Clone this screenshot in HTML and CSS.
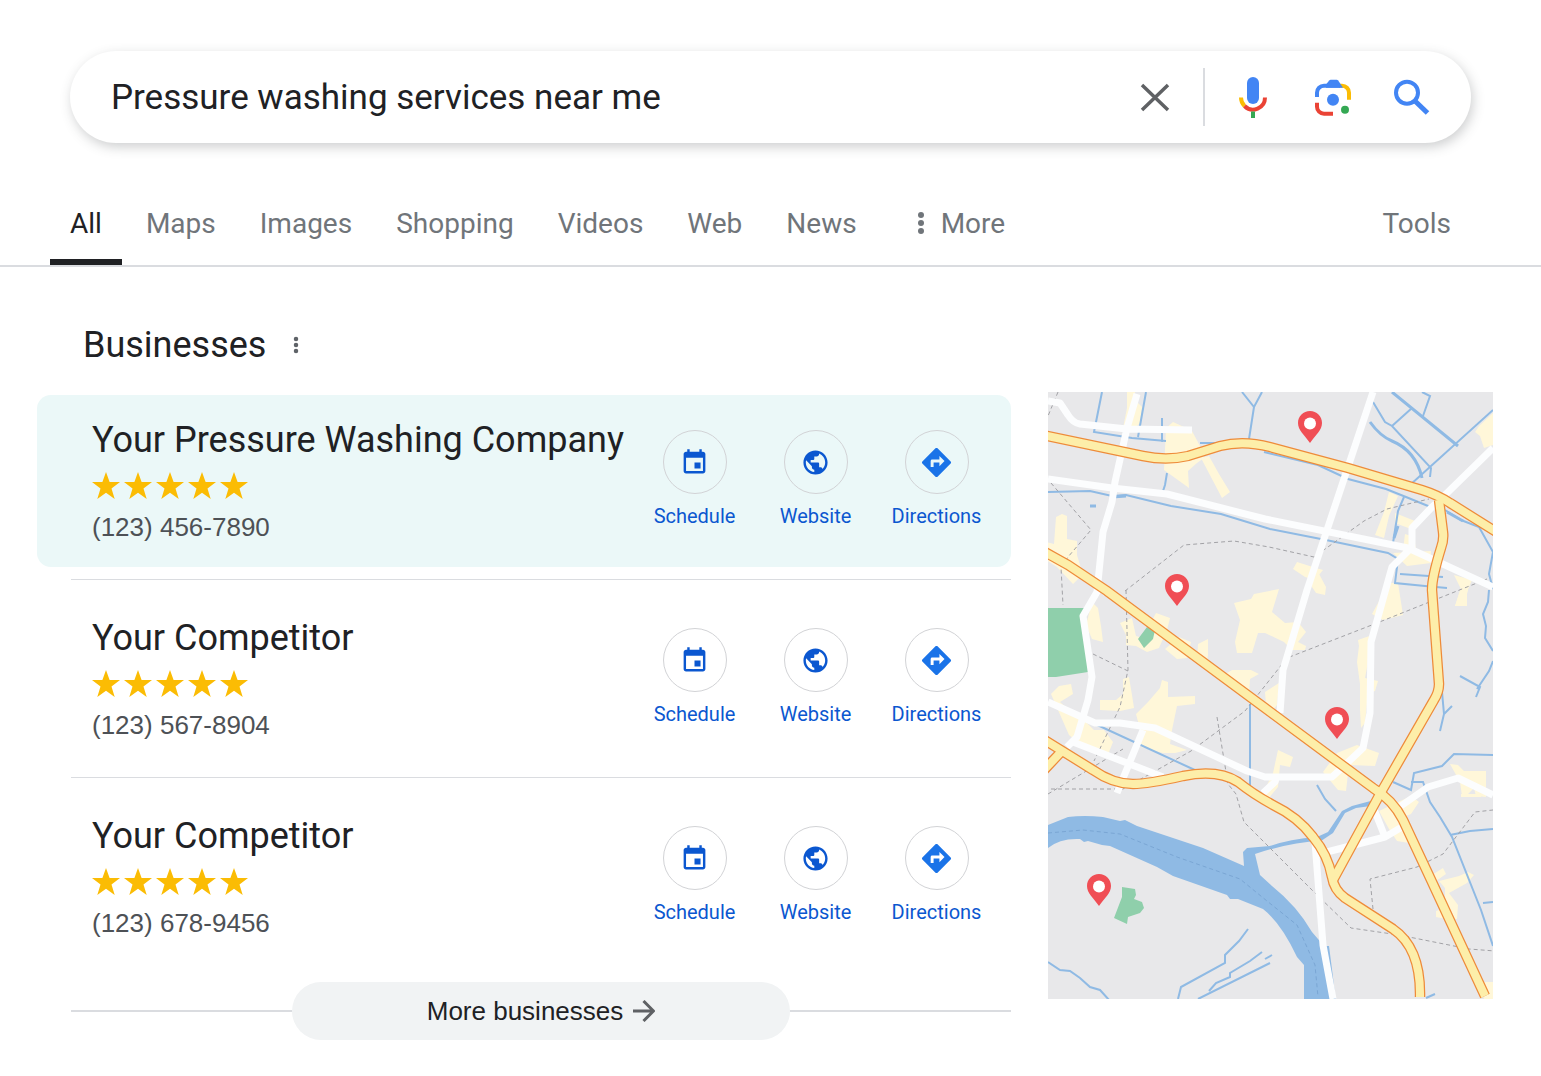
FILE: index.html
```html
<!DOCTYPE html>
<html lang="en">
<head>
    <meta charset="UTF-8">
    <meta name="viewport" content="width=device-width, initial-scale=1">
    <title>Pressure washing services near me</title>
    <link rel="stylesheet" href="styles.css">
</head>
<body>
    <!-- Shared icons -->
    <svg class="sprite" aria-hidden="true">
        <symbol id="star" viewBox="0 0 28 27">
            <path d="M14 0l3.600 10H28l-8.500 6.400L22.700 27 14 20.700 5.300 27l3.200-10.600L0 10h10.400z"/>
        </symbol>
        <symbol id="calendar" viewBox="0 0 24 24">
            <path d="M17 12h-5v5h5v-5zM16 1v2H8V1H6v2H5c-1.110 0-1.990.9-1.990 2L3 19c0 1.100.890 2 2 2h14c1.100 0 2-.9 2-2V5c0-1.100-.9-2-2-2h-1V1h-2zm3 18H5V8h14v11z"/>
        </symbol>
        <symbol id="globe" viewBox="0 0 24 24">
            <path d="M12 2C6.480 2 2 6.480 2 12s4.480 10 10 10 10-4.480 10-10S17.520 2 12 2zm-1 17.930c-3.950-.49-7-3.850-7-7.930 0-.62.080-1.210.210-1.790L9 15v1c0 1.100.9 2 2 2v1.930zm6.900-2.540c-.26-.81-1-1.390-1.900-1.390h-1v-3c0-.55-.45-1-1-1H8v-2h2c.55 0 1-.45 1-1V7h2c1.100 0 2-.9 2-2v-.41c2.930 1.190 5 4.060 5 7.410 0 2.080-.8 3.970-2.100 5.390z"/>
        </symbol>
        <symbol id="directions" viewBox="0 0 24 24">
            <path d="M21.710 11.290l-9-9c-.39-.39-1.020-.39-1.410 0l-9 9c-.39.390-.39 1.020 0 1.410l9 9c.390.390 1.020.390 1.410 0l9-9c.390-.38.390-1.010 0-1.410zM14 14.500V12h-4v3H8v-4c0-.55.450-1 1-1h5V7.500l3.500 3.500-3.500 3.500z"/>
        </symbol>
        <symbol id="dots" viewBox="0 0 8 24">
            <circle cx="4" cy="4" r="3"/>
            <circle cx="4" cy="12" r="3"/>
            <circle cx="4" cy="20" r="3"/>
        </symbol>
        <symbol id="pin" viewBox="0 0 24 32">
            <path fill="#f04e55" d="M12 0C5.300 0 0 5.300 0 12c0 7 6 11.500 12 20 6-8.500 12-13 12-20 0-6.700-5.300-12-12-12z"/>
            <circle cx="12" cy="12.500" r="6" fill="#fff"/>
        </symbol>
    </svg>

    <form class="search" role="search">
        <input class="search-input" type="text" aria-label="Search" value="Pressure washing services near me">
        <button class="icon-button" type="reset" aria-label="Clear">
            <svg viewBox="0 0 40 40" fill="none" stroke="#5f6164" stroke-width="3.500">
                <path d="M7 8l26 25M33 8L7 33"/>
            </svg>
        </button>
        <span class="search-divider"></span>
        <button class="icon-button" type="button" aria-label="Search by voice">
            <svg viewBox="0 0 40 40" fill="none" stroke-width="4">
                <rect x="14" y="0" width="12" height="27" rx="6" fill="#4285f4"/>
                <path stroke="#fbbc04" d="M8 20.500a12 12 0 0 0 3.500 8.500"/>
                <path stroke="#ea4335" d="M11.500 29A12 12 0 0 0 32 20.500"/>
                <path stroke="#34a853" d="M20 34.500V41"/>
            </svg>
        </button>
        <button class="icon-button wide" type="button" aria-label="Search by image">
            <svg viewBox="0 0 40 40" fill="none" stroke-width="4">
                <path stroke="#fbbc04" d="M26 8.700h3a7 7 0 0 1 7 7v7"/>
                <path stroke="#4285f4" d="M4 20v-4.300a7 7 0 0 1 7-7h16"/>
                <path fill="#4285f4" d="M13 7.500l3.200-4.100q.6-.7 1.500-.7h6q.9 0 1.500.7l4.800 7.300H13z"/>
                <path stroke="#ea4335" d="M4 25.700v4a7 7 0 0 0 7 7h9"/>
                <circle cx="20" cy="22.700" r="6" fill="#4285f4"/>
                <circle cx="32" cy="32.700" r="4" fill="#34a853"/>
            </svg>
        </button>
        <button class="icon-button wide" type="submit" aria-label="Search">
            <svg viewBox="0 0 40 40" fill="none" stroke="#4285f4">
                <circle cx="14" cy="15.700" r="11" stroke-width="4"/>
                <path stroke-width="5" d="M22 24l12.500 12"/>
            </svg>
        </button>
    </form>

    <nav class="tabs">
        <a class="tab active" href="#">All</a>
        <a class="tab" href="#">Maps</a>
        <a class="tab" href="#">Images</a>
        <a class="tab" href="#">Shopping</a>
        <a class="tab" href="#">Videos</a>
        <a class="tab" href="#">Web</a>
        <a class="tab" href="#">News</a>
        <a class="tab more" href="#"><svg class="more-dots"><use href="#dots"/></svg>More</a>
        <a class="tab tools" href="#">Tools</a>
    </nav>

    <main class="results">
        <section class="businesses">
            <div class="heading">
                <h1>Businesses</h1>
                <button class="menu-button" type="button" aria-label="About these results"><svg><use href="#dots"/></svg></button>
            </div>

            <ul class="list">
                <li class="item">
                    <article class="business highlighted">
                        <div class="info">
                            <h2>Your Pressure Washing Company</h2>
                            <div class="stars" role="img" aria-label="5 stars">
                                <svg><use href="#star"/></svg><svg><use href="#star"/></svg><svg><use href="#star"/></svg><svg><use href="#star"/></svg><svg><use href="#star"/></svg>
                            </div>
                            <p class="phone">(123) 456-7890</p>
                        </div>
                        <div class="actions">
                            <a class="action" href="#"><span class="circle"><svg><use href="#calendar"/></svg></span>Schedule</a>
                            <a class="action" href="#"><span class="circle"><svg><use href="#globe"/></svg></span>Website</a>
                            <a class="action" href="#"><span class="circle"><svg class="route"><use href="#directions"/></svg></span>Directions</a>
                        </div>
                    </article>
                </li>
                <li class="item">
                    <article class="business">
                        <div class="info">
                            <h2>Your Competitor</h2>
                            <div class="stars" role="img" aria-label="5 stars">
                                <svg><use href="#star"/></svg><svg><use href="#star"/></svg><svg><use href="#star"/></svg><svg><use href="#star"/></svg><svg><use href="#star"/></svg>
                            </div>
                            <p class="phone">(123) 567-8904</p>
                        </div>
                        <div class="actions">
                            <a class="action" href="#"><span class="circle"><svg><use href="#calendar"/></svg></span>Schedule</a>
                            <a class="action" href="#"><span class="circle"><svg><use href="#globe"/></svg></span>Website</a>
                            <a class="action" href="#"><span class="circle"><svg class="route"><use href="#directions"/></svg></span>Directions</a>
                        </div>
                    </article>
                </li>
                <li class="item">
                    <article class="business">
                        <div class="info">
                            <h2>Your Competitor</h2>
                            <div class="stars" role="img" aria-label="5 stars">
                                <svg><use href="#star"/></svg><svg><use href="#star"/></svg><svg><use href="#star"/></svg><svg><use href="#star"/></svg><svg><use href="#star"/></svg>
                            </div>
                            <p class="phone">(123) 678-9456</p>
                        </div>
                        <div class="actions">
                            <a class="action" href="#"><span class="circle"><svg><use href="#calendar"/></svg></span>Schedule</a>
                            <a class="action" href="#"><span class="circle"><svg><use href="#globe"/></svg></span>Website</a>
                            <a class="action" href="#"><span class="circle"><svg class="route"><use href="#directions"/></svg></span>Directions</a>
                        </div>
                    </article>
                </li>
            </ul>

            <div class="more-row">
                <button class="more-button" type="button">
                    More businesses
                    <svg viewBox="0 0 22 22" fill="none" stroke="#5f6164" stroke-width="3"><path d="M0 11h20M10.500 1l10 10-10 10"/></svg>
                </button>
            </div>
        </section>

        <svg class="map" viewBox="0 0 445 607" role="img" aria-label="Map of businesses">
            <rect width="445" height="607" fill="#e8e8ea"/>

            <!-- built-up areas -->
            <g fill="#fff7d9">
                <path d="M79 0h8l-1 7 8 8-2 16-7 7-10-2 4-20zM118 36l7-6 11 5 8 4 8 15 4 12-7 5-9 8 1 17-25-18z"/>
                <path d="M153 66l8-2 10 18 11 18-8 6zM8 125l6-3 5 2 0 23 10 2 0 14 3 10 3 9-10 10-16-17-11-7v-18l8 2z"/>
                <path d="M341 100l9 4-9 20-5 22-9-3 9-23zM347 121l20 8-4 8-16-6zM249 170l19 6 7 2-8 10-10-3-12-8zM270 180l8 15-1 8-9-2-8-12zM357 142l9 3 4 25-16-4zM345 161l38-2v12l-24 3zM406 183l18 5-5 12 0 14-12 0 6-17zM431 34l14-13v32l-9 3-4-12-5-4z"/>
                <path d="M186 211l17-4 3-5 25-5-7 23 13 11 13-1 8 10-8 10 8 4-1 4h-13l-8-8-19-9h-7l-6 20-15 0-2-11 5-22z"/>
                <path d="M341 191l9 0 5 32-20 5-11-6zM310 248l17-6-5 18-5 26 13 3-3 10-7 2-3 30-4 5-1-18 0-26-3-22 2-16zM412 198h8l-4 16-9 0z"/>
                <path d="M72 231l12-5 4 18 10 3 4-15 6-11 14 5-3 12-8 18-12 4-11-6-10-1v-10zM44 210l6 6 3 18 2 16-11-3-6-14zM117 257l14-12 12 5-4 16-10 1zM150 252l10-5 0 16-2 14-9-8zM174 284l10-6 19 0 8 4-9 5-1 18-10-5z"/>
                <path d="M3 302l8-8 12-2 2 10-13 8 8 7 14 9 12 12 10 0 9 12-6 15-26-12-12-10zM52 308h16l7-6v-15l6-2 3 18 2 13-14 3-20-1z"/>
                <path d="M88 322l12-12 12-14 2-8 6 2 0 15 27-1v8l-18 2-5 24-2 14 17 6-12 3-12 0-22-6 0-14z"/>
                <path d="M217 300l14-9-2 22-10 12zM230 358l15 7-3 10-10-2-2 22-10 12-5-6 10-20zM289 361l20-8 22 8-4 13-26-1-3 26-8-1-15-18zM402 372l8 1 6 6 22 0 0 26-10-1-2-8-8 8h-4l-2-14zM333 418l30-14 8 6-8 12-10 4 8 25-12-2-8-12-10-18zM384 483l11-7 3 6-10 7zM391 489l20-5 9-4 6 3-7 8-18 10 9 12-1 14-16-1-5-1 0-6 9-3 0-20z"/>
                <path d="M434 590h11v17h-9zM413 402h20v3h-20z"/>
            </g>

            <!-- parks -->
            <g fill="#8fcfab">
                <path d="M0 216h36l4 64-32 5H0z"/>
                <path d="M90 247l9-12 8 3-2 9-9 9zM74 495l13 2 1 6-2 4 8 3 2 6-4 5-12 4-1 7-13-6 8-21z"/>
            </g>

            <!-- water -->
            <path fill="#8fbae4" d="M0 433l20-8q16-2 35 0l17 4 5-1 12 6 66 22 41 18-1-14 4-4 23-2q20-7 47-9l11-5 14-21 10-5 26-7v6l-22 3-11 5-12 20-12 8q-30 1-66 13l5 21 12 11q25 20 40 46l12 14h5q4 30 7 57H256V573l-7-8q-16-34-34-48l-25-10h-8l-3-4-54-19-16-9-47-21-8-1-14-4-4 1-4-3q-20-1-32 9z"/>
            <g fill="none" stroke="#8fbae4" stroke-width="2">
                <path d="M54 0l-8 40 38 6 34 3M98 0l-8 45M114 26v24M119 81l-2 12-2 6M194 0l12 15 8-15M206 15l-5 32M152 51h18M0 100l42-1 22 5 14-1 45 11 50 8 49 15 56 11 62 13 10 6-3 24 30 3 22 2M216 60l54 13 30 14 38 10 20 8 27 11"/>
                <path d="M325 10l12 20 7 4 39 42-1 9M362 93l83-75M344 34l20-18M374 0l8 4-7 20M356 105l-6 14-5 32M397 118l16 10 18 7 14 25-4 22 4 15M352 182l43 3"/>
                <path d="M202 312v88M45 331l104 48M441 198l-1 12-5 12 3 12-1 12 8 13M412 284l20 11-4 10M429 297l12-18 4-10M394 300l2 22-4 17M396 322l8-8"/>
                <path d="M345 390l18 8 3-17 28-7 12-12 39 1M363 390h12l7 20 10 15 12 20 29 73 12 36M402 443l20-4 23-2M435 511l10-1M269 393l8 14 11 12"/>
                <path d="M0 570l12 8 10 1 10 7 10 9 10 3 10 11M130 607l3-12 44-24v-8l14-14 9-12M150 607l72-36M161 599l7-8 14-6v-4l20-12 12-9M217 567l7-4M378 606l9-4"/>
            </g>
            <g fill="none" stroke="#8fbae4" stroke-width="3">
                <path d="M344 0l66 54M322 30q10 14 22 19 24 10 30 37M64 105l14-1M42 114h6M399 120l16 9M346 146l4-12"/>
            </g>

            <!-- district borders -->
            <g fill="none" stroke="#a2a2a6" stroke-dasharray="4 3">
                <path d="M10 0L0 24M3 91l40 47-23 27-7 10 2 38M77 199l59-46 50-4 35 6 45 10 50-36 23-12 42-10M78 198l2 80-8 37-26 54M45 262l35 17M0 402l75-45M3 397h72l68-38 54-40 42-53 90-35 60-24 50-20M169 325l11 67 8 10 8 28 30 30 40 40 37 36 48 7 70 14 26 2M325 517l-3-30 47-12 26-13 32-42 18-2"/>
                <path stroke="#7aa6d4" d="M0 441l35-3 37 4 57 23 63 22 27 22 30 24 18 40 3 32"/>
            </g>

            <!-- streets -->
            <g fill="none" stroke="#fcfdfe" stroke-width="7" stroke-linejoin="round">
                <path d="M0 9l12 2 8 12q5 8 12 9l47 5 65 1M89 2L79 36 67 90l-3 20-9 30-6 60-14 24 9 61-4 23-11 37-10 10"/>
                <path d="M0 87l64 9 55 6 98 25 143 29 85 39M325 0l-66 198-20 67-4 13-3 43"/>
                <path d="M445 56l-48 47-13 12-20 21v19l-20 20-7 25-14 50-1 71-7 35-18 17-13 12h-67l-18-6-92-43-35-5H47L0 310"/>
                <path d="M25 350l90 35M95 338l-26 63M229 384l-2 6-12 11M350 416l30-21 30-9 35 17M324 412l13 33 17-10M275 461l62-16M267 450l8 103 10 54"/>
            </g>

            <!-- main roads, casing first -->
            <g fill="none" stroke="#ee8b3a" stroke-width="10.500">
                <path d="M-5 43l100 21q23 5 45 0l32-10q23-6 50 1l78 21 74 22q16 5 28 13l48 30"/>
                <path d="M-4 378l17-18M391 108l4 32q1 8-2 16-9 29-9 42l7 94q0 8-5 16l-54 94-47 86"/>
                <path d="M-5 347l50 31q20 14 40 14 15 0 50-8 35-7 55 6 15 12 35 23 25 12 40 32 15 18 19 40 2 13 13 21l48 31q28 19 27 68"/>
                <path d="M-5 159l25 14 39 26 158 117 108 80q20 12 30 32l29 62 53 114"/>
            </g>
            <g fill="none" stroke="#fdeea9" stroke-width="8">
                <path d="M-5 43l100 21q23 5 45 0l32-10q23-6 50 1l78 21 74 22q16 5 28 13l48 30"/>
                <path d="M-4 378l17-18M391 108l4 32q1 8-2 16-9 29-9 42l7 94q0 8-5 16l-54 94-47 86"/>
                <path d="M-5 347l50 31q20 14 40 14 15 0 50-8 35-7 55 6 15 12 35 23 25 12 40 32 15 18 19 40 2 13 13 21l48 31q28 19 27 68"/>
                <path d="M-5 159l25 14 39 26 158 117 108 80q20 12 30 32l29 62 53 114"/>
            </g>

            <!-- pins -->
            <use href="#pin" x="250" y="19" width="24" height="32"/>
            <use href="#pin" x="117" y="182" width="24" height="32"/>
            <use href="#pin" x="277" y="315" width="24" height="32"/>
            <use href="#pin" x="39" y="482" width="24" height="32"/>
        </svg>
    </main>
</body>
</html>
```
FILE: styles.css
```css
* {
    box-sizing: border-box;
}
body {
    margin: 0;
    background-color: #fff;
    color: #202124;
    font-family: Roboto, "Liberation Sans", sans-serif;
}
a {
    color: inherit;
    text-decoration: none;
}
button {
    padding: 0;
    border: none;
    background: none;
    font: inherit;
    color: inherit;
    cursor: pointer;
}
svg {
    display: block;
    flex: none;
}
.sprite {
    position: absolute;
    width: 0;
    height: 0;
}

/* Search bar */
.search {
    display: flex;
    align-items: center;
    height: 92px;
    margin: 51px 70px 0;
    padding: 0 38px 0 41px;
    border-radius: 46px;
    box-shadow: 2px 4px 12px rgba(60, 64, 67, 0.25);
}
.search-input {
    flex: 1;
    min-width: 0;
    padding: 0;
    border: none;
    outline: none;
    background: none;
    color: #202124;
    font-family: inherit;
    font-size: 35px;
}
.icon-button svg {
    width: 40px;
    height: 40px;
    overflow: visible;
}
.icon-button.wide {
    margin-left: 40px;
}
.search-divider {
    width: 2px;
    height: 58px;
    margin: 0 28px;
    background-color: #dadce0;
}

/* Tabs */
.tabs {
    display: flex;
    gap: 4px;
    margin-top: 36px;
    padding: 0 70px 0 50px;
    border-bottom: 2px solid #dadce0;
}
.tab {
    display: flex;
    align-items: center;
    height: 86px;
    padding: 8px 20px 0;
    border-bottom: 6px solid transparent;
    color: #70757a;
    font-size: 28px;
}
.tab.active {
    border-color: #202124;
    color: #202124;
}
.tab.more {
    margin-left: 16px;
}
.more-dots {
    width: 8px;
    height: 24px;
    margin-right: 16px;
    fill: #70757a;
}
.tab.tools {
    margin-left: auto;
}

/* Results */
.results {
    display: grid;
    grid-template-columns: 974fr 445fr;
    gap: 37px;
    align-items: start;
    padding: 56px 48px 36px 37px;
}
.heading {
    display: flex;
    align-items: center;
    gap: 26px;
    padding-left: 46px;
}
h1, h2 {
    margin: 0;
    font-size: 36px;
    line-height: 44px;
    font-weight: 400;
}
.menu-button svg {
    width: 8px;
    height: 18px;
    fill: #5f6368;
}
.list {
    margin: 15px 0 0 34px;
    padding: 0;
    list-style: none;
}
.item {
    padding: 13px 0 12px;
    border-bottom: 1px solid #dadce0;
}
.item:last-child {
    border-bottom: none;
}
.business {
    display: flex;
    justify-content: space-between;
    padding: 23px 14px 25px 21px;
}
.business.highlighted {
    margin-left: -34px;
    padding-left: 55px;
    border-radius: 14px;
    background-color: #ebf8f8;
}
.info h2 {
    white-space: nowrap;
}
.stars {
    display: flex;
    gap: 4px;
    margin-top: 10px;
}
.stars svg {
    width: 28px;
    height: 27px;
    fill: #fbbc04;
}
.phone {
    margin: 13px 0 0;
    color: #4d5156;
    font-family: "Liberation Sans", Arial, sans-serif;
    font-size: 26px;
    line-height: 30px;
}
.actions {
    display: grid;
    grid-template-columns: repeat(3, 121px);
    padding-top: 12px;
}
.action {
    display: flex;
    flex-direction: column;
    align-items: center;
    gap: 10px;
    color: #0b57d0;
    font-size: 20px;
    line-height: 24px;
}
.circle {
    display: flex;
    align-items: center;
    justify-content: center;
    width: 64px;
    height: 64px;
    border: 1px solid #d2d3d6;
    border-radius: 50%;
}
.circle svg {
    width: 29px;
    height: 29px;
    fill: #0b57d0;
}
.circle .route {
    width: 35px;
    height: 35px;
    fill: #1a73e8;
}

/* More businesses */
.more-row {
    display: flex;
    align-items: center;
    margin: 7px 0 0 34px;
}
.more-row::before,
.more-row::after {
    content: "";
    flex: 1;
    height: 2px;
    background-color: #dadce0;
}
.more-button {
    display: flex;
    align-items: center;
    justify-content: center;
    gap: 10px;
    width: 53%;
    height: 58px;
    border-radius: 29px;
    background-color: #f1f3f4;
    font-family: "Liberation Sans", Arial, sans-serif;
    font-size: 26px;
}
.more-button svg {
    width: 22px;
    height: 22px;
}

.map {
    width: 100%;
    height: auto;
    margin-top: 69px;
}
```
